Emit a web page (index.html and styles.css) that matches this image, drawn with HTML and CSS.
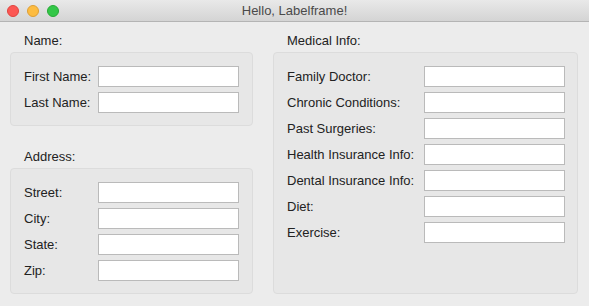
FILE: index.html
```html
<!DOCTYPE html>
<html lang="en">
<head>
    <meta charset="UTF-8">
    <meta name="viewport" content="width=device-width, initial-scale=1.0">
    <title>Hello, Labelframe!</title>
    <link rel="stylesheet" href="styles.css">
</head>
<body>
    <div class="window">
        <div class="titlebar">
            <div class="lights">
                <span class="light close"></span>
                <span class="light minimize"></span>
                <span class="light zoom"></span>
            </div>
            <div class="title">Hello, Labelframe!</div>
        </div>

        <div class="content">
            <div class="column">
                <div class="section">
                    <div class="legend">Name:</div>
                    <div class="frame name-frame">
                        <label for="firstName">First Name:</label>
                        <input type="text" id="firstName">
                        <label for="lastName">Last Name:</label>
                        <input type="text" id="lastName">
                    </div>
                </div>

                <div class="section address">
                    <div class="legend">Address:</div>
                    <div class="frame name-frame">
                        <label for="street">Street:</label>
                        <input type="text" id="street">
                        <label for="city">City:</label>
                        <input type="text" id="city">
                        <label for="state">State:</label>
                        <input type="text" id="state">
                        <label for="zip">Zip:</label>
                        <input type="text" id="zip">
                    </div>
                </div>
            </div>

            <div class="column">
                <div class="section grow">
                    <div class="legend">Medical Info:</div>
                    <!-- 右侧框一直拉到底部 -->
                    <div class="frame medical-frame">
                        <label for="doctor">Family Doctor:</label>
                        <input type="text" id="doctor">
                        <label for="chronic">Chronic Conditions:</label>
                        <input type="text" id="chronic">
                        <label for="surgeries">Past Surgeries:</label>
                        <input type="text" id="surgeries">
                        <label for="health">Health Insurance Info:</label>
                        <input type="text" id="health">
                        <label for="dental">Dental Insurance Info:</label>
                        <input type="text" id="dental">
                        <label for="diet">Diet:</label>
                        <input type="text" id="diet">
                        <label for="exercise">Exercise:</label>
                        <input type="text" id="exercise">
                    </div>
                </div>
            </div>
        </div>
    </div>
</body>
</html>
```

FILE: styles.css
```css
html, body {
    margin: 0;
    padding: 0;
}
body {
    font-family: "Liberation Sans", Arial, sans-serif;
    font-size: 13px;
    color: #222;
    background-color: #ececec;
}
.window {
    width: 589px;
    height: 306px;
    display: flex;
    flex-direction: column;
    overflow: hidden;
}
.titlebar {
    height: 21px;
    flex: none;
    position: relative;
    background: linear-gradient(#e9e9e9, #d4d4d4);
    border-bottom: 1px solid #b4b4b4;
}
.lights {
    position: absolute;
    left: 7px;
    top: 5px;
    display: flex;
    gap: 8px;
}
.light {
    width: 12px;
    height: 12px;
    border-radius: 50%;
    box-sizing: border-box;
}
.close {
    background-color: #fc5753;
    border: 1px solid #e0443e;
}
.minimize {
    background-color: #fdbc40;
    border: 1px solid #de9f34;
}
.zoom {
    background-color: #33c748;
    border: 1px solid #27aa35;
}
.title {
    text-align: center;
    line-height: 22px;
    color: #4a4a4a;
}
.content {
    flex: 1;
    display: grid;
    grid-template-columns: 243px 305px;
    column-gap: 20px;
    padding: 11px 11px 12px 10px;
}
.column {
    display: flex;
    flex-direction: column;
}
.section {
    display: flex;
    flex-direction: column;
}
.section.grow {
    flex: 1;
}
.section.address {
    margin-top: 23px;
}
.legend {
    line-height: 16px;
    padding-left: 14px;
    margin-bottom: 3px;
}
.frame {
    display: grid;
    row-gap: 5px;
    align-items: center;
    align-content: start;
    padding: 13px 13px 12px 13px;
    background-color: #e7e7e7;
    border: 1px solid #dcdcdc;
    border-radius: 4px;
}
.name-frame {
    grid-template-columns: 74px 141px;
}
.medical-frame {
    flex: 1;
    grid-template-columns: 137px 141px;
}
.frame label {
    white-space: nowrap;
}
.frame input {
    box-sizing: border-box;
    width: 141px;
    height: 21px;
    margin: 0;
    padding: 2px 4px;
    border: 1px solid #bababa;
    background-color: #fff;
    font-family: inherit;
    font-size: 13px;
}
```
